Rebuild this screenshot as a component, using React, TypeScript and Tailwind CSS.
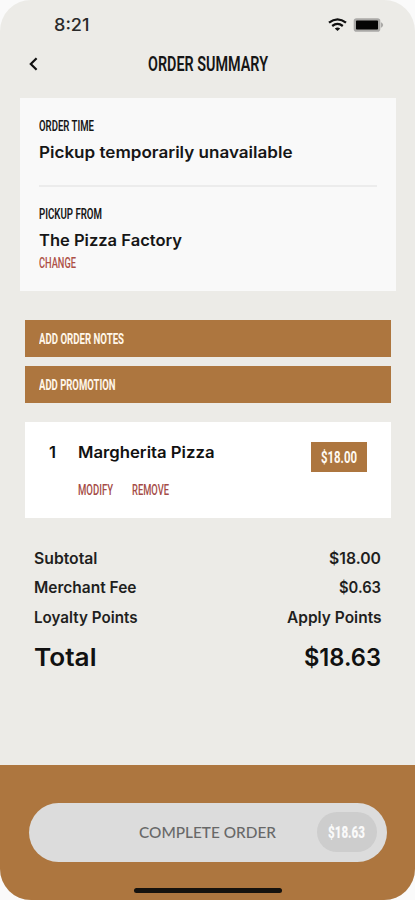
import { useLayoutEffect, useRef, useState } from "react";
import type { ReactNode } from "react";
import { clsx } from "clsx";

const display = "font-['Roboto',sans-serif]";
const body = "font-['Inter',sans-serif]";

interface FitProps {
  width: number;
  className?: string;
  children: ReactNode;
}

// Condenses or expands a line of type to a set measure.
function Fit({ width, className, children }: FitProps) {
  const ref = useRef<HTMLSpanElement>(null);
  const [scale, setScale] = useState(1);
  useLayoutEffect(() => {
    if (ref.current) setScale(width / parseFloat(getComputedStyle(ref.current).width));
  }, [width]);
  return (
    <span className="flex shrink-0 items-start" style={{ width }}>
      <span
        ref={ref}
        className={clsx("block shrink-0 origin-left whitespace-nowrap", className)}
        style={{ transform: `scaleX(${scale})` }}
      >
        {children}
      </span>
    </span>
  );
}

function StatusBar() {
  return (
    <div className="flex h-[50px] items-center pl-[54px] pr-[31px]">
      <Fit width={35.5} className={clsx(body, "text-[17px] leading-[51px] font-medium text-[#2a2a2a]")}>8:21</Fit>
      <svg className="ml-auto" width="19" height="14" viewBox="0 0 19 14" fill="none" stroke="#111" strokeWidth="2.3">
        <path d="M1 4.7Q9.5 -2 18 4.7" />
        <path d="M4.2 8Q9.5 3.8 14.8 8" />
        <path d="M6.8 10.5Q9.5 8.4 12.2 10.5L9.5 13Z" fill="#111" stroke="none" />
      </svg>
      <svg className="ml-[6px]" width="31" height="14" viewBox="0 0 31 14">
        <rect x="0.7" y="0.3" width="26.6" height="13.4" rx="2.8" fill="#aaa9a7" />
        <rect x="3" y="2.6" width="22" height="9" rx="0.8" fill="#050505" />
        <path d="M27.8 4Q32.6 7 27.8 10Z" fill="#aaa9a7" />
      </svg>
    </div>
  );
}

function Header() {
  return (
    <header className="flex h-7 items-center pl-[29px]">
      <svg width="9" height="14" viewBox="0 0 9 14" fill="none" stroke="#111" strokeWidth="2.2">
        <path d="M7.6 1.2L1.8 7L7.6 12.8" />
      </svg>
      <div className="ml-[110px]">
        <Fit width={120} className={clsx(display, "text-[20px] leading-7 font-semibold text-[#161616]")}>ORDER SUMMARY</Fit>
      </div>
    </header>
  );
}

function PickupCard() {
  const label = clsx(display, "text-[14.5px] leading-5 font-semibold text-[#161616]");
  const value = clsx(body, "text-[16px] leading-6 font-semibold text-[#161616]");
  return (
    <section className="mt-5 mr-[19px] ml-5 h-[193px] bg-[#f9f9f9] px-[19px] pt-[19px]">
      <Fit width={55} className={label}>ORDER TIME</Fit>
      <div className="mt-[3px]"><Fit width={253.5} className={value}>Pickup temporarily unavailable</Fit></div>
      <div className="mt-[21px] h-[2px] bg-[#ececec]" />
      <div className="mt-[18px]"><Fit width={63} className={label}>PICKUP FROM</Fit></div>
      <div className="mt-[3px]"><Fit width={143} className={value}>The Pizza Factory</Fit></div>
      <div className="mt-[2px]"><Fit width={37} className={clsx(display, "text-[14.5px] leading-5 font-medium text-[#ad5046]")}>CHANGE</Fit></div>
    </section>
  );
}

function ActionBar({ label, width }: { label: string; width: number }) {
  return (
    <button className="flex h-[37px] w-full items-start bg-[#ad763f] pl-[14px]">
      <Fit width={width} className={clsx(display, "text-left text-[14.5px] leading-[39px] font-bold text-[#fff6ea]")}>{label}</Fit>
    </button>
  );
}

function ItemCard() {
  const link = clsx(display, "text-[14px] leading-5 font-medium text-[#a54c47]");
  return (
    <section className="mt-[19px] flex h-24 bg-white pr-6">
      <div className="ml-6 pt-[18px]">
        <Fit width={7} className={clsx(body, "text-[16px] leading-6 font-semibold text-[#111]")}>1</Fit>
      </div>
      <div className="ml-[22.5px] pt-[18px]">
        <Fit width={136.5} className={clsx(body, "text-[16px] leading-6 font-semibold text-[#111]")}>Margherita Pizza</Fit>
        <div className="mt-4 flex gap-[19px]">
          <Fit width={35} className={link}>MODIFY</Fit>
          <Fit width={37} className={link}>REMOVE</Fit>
        </div>
      </div>
      <div className="mt-5 ml-auto flex h-[30px] w-14 justify-center bg-[#ad763f]">
        <Fit width={36} className={clsx(display, "text-[16.5px] leading-[31px] font-bold text-[#fffaf2]")}>$18.00</Fit>
      </div>
    </section>
  );
}

const totals = [
  { label: "Subtotal", labelWidth: 63.5, value: "$18.00", valueWidth: 52 },
  { label: "Merchant Fee", labelWidth: 102.5, value: "$0.63", valueWidth: 42 },
  { label: "Loyalty Points", labelWidth: 103.5, value: "Apply Points", valueWidth: 94.5 },
];

function Totals() {
  const row = clsx(body, "text-[15.5px] leading-[29.6px] font-semibold text-[#1f1f1e]");
  const total = clsx(body, "text-[24.5px] leading-10 font-semibold text-[#111]");
  return (
    <section className="mt-[25.5px] pr-[34px] pl-[34px]">
      {totals.map((t) => (
        <div key={t.label} className="flex h-[29.6px] justify-between">
          <Fit width={t.labelWidth} className={row}>{t.label}</Fit>
          <Fit width={t.valueWidth} className={row}>{t.value}</Fit>
        </div>
      ))}
      <div className="mt-[4.7px] flex justify-between">
        <Fit width={62.5} className={total}>Total</Fit>
        <Fit width={77} className={total}>$18.63</Fit>
      </div>
    </section>
  );
}

function Footer() {
  return (
    <footer className="mt-auto flex h-[135px] flex-col items-center bg-[#ad763f] pt-[37.5px]">
      <button className="flex h-[59px] w-[358px] items-center rounded-full bg-[#dcdcdc] pr-[10px] pl-[110px]">
        <span className="pb-[2px]">
          <Fit width={137} className="font-['Lato',sans-serif] text-left text-[16px] leading-[57px] font-medium text-[#686868]">COMPLETE ORDER</Fit>
        </span>
        <span className="ml-auto flex h-10 w-[60px] justify-center rounded-full bg-[#cdcdcd]">
          <Fit width={37} className={clsx(display, "text-left text-[16.5px] leading-[42px] font-black text-[#fafafa]")}>$18.63</Fit>
        </span>
      </button>
      <div className="mt-[26px] h-[5px] w-[148px] rounded-full bg-[#15120e]" />
    </footer>
  );
}

export default function App() {
  return (
    <div className="h-[900px] w-[415px] overflow-hidden bg-[#fafafa]">
      <main className="flex h-full flex-col overflow-hidden rounded-[31px] bg-[#ecebe7]">
        <StatusBar />
        <Header />
        <PickupCard />
        <div className="mt-[28.5px] mr-6 ml-[24.5px]">
          <div className="flex flex-col gap-[9.5px]">
            <ActionBar label="ADD ORDER NOTES" width={85} />
            <ActionBar label="ADD PROMOTION" width={76.5} />
          </div>
          <ItemCard />
        </div>
        <Totals />
        <Footer />
      </main>
    </div>
  );
}
